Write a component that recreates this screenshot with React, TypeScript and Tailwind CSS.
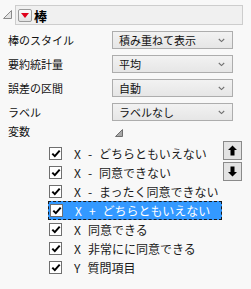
import React from "react";

const font = { fontFamily: '"Noto Sans CJK JP", "Noto Sans", sans-serif' };

function Chevron() {
  return (
    <svg width="7" height="5" viewBox="0 0 7 5" className="shrink-0">
      <path d="M0.8 1 L3.5 3.6 L6.2 1" fill="none" stroke="#707070" strokeWidth="1.1" />
    </svg>
  );
}

function Dropdown({ text }: { text: string }) {
  return (
    <div className="flex h-[18px] w-[121px] items-center justify-between border border-[#adadad] bg-gradient-to-b from-[#f2f2f2] to-[#e6e6e6] pl-[6px] pr-[7px] text-[11px] leading-none text-[#111]">
      <span>{text}</span>
      <Chevron />
    </div>
  );
}

function Check({ selected }: { selected?: boolean }) {
  return (
    <div className="flex h-[13px] w-[13px] shrink-0 items-center justify-center border border-[#6f6f6f] bg-white">
      <svg width="10" height="9" viewBox="0 0 10 9">
        <path d="M1.3 4.6 L3.8 7.1 L8.7 1.6" fill="none" stroke="#000" strokeWidth="2" />
      </svg>
    </div>
  );
}

const rows = [
  { text: "X - どちらともいえない" },
  { text: "X - 同意できない" },
  { text: "X - まったく同意できない" },
  { text: "X + どちらともいえない", selected: true },
  { text: "X 同意できる" },
  { text: "X 非常にに同意できる" },
  { text: "Y 質問項目" },
];

function Label({ t }: { t: string }) {
  const [a, ...rest] = t.split(" ");
  return (
    <span className="flex items-center whitespace-nowrap">
      <span>{a}</span>
      {rest.length === 2 ? (
        <>
          <span className="ml-[7px]">{rest[0]}</span>
          <span className="ml-[7px]">{rest[1]}</span>
        </>
      ) : (
        <span className="ml-[7px]">{rest.join(" ")}</span>
      )}
    </span>
  );
}

export default function App() {
  return (
    <div className="h-[289px] w-[251px] overflow-hidden bg-[#f8f8f8] text-[#111]" style={font}>
      {/* header */}
      <div className="flex items-start pt-[5px]">
        <svg width="15" height="19" viewBox="0 0 15 19" className="shrink-0">
          <path d="M3.5 13.5 L11.5 5.5 L11.5 13.5 Z" fill="#e4e4e4" stroke="#8a8a8a" strokeWidth="1" />
        </svg>
        <div className="flex h-[20px] w-[228px] items-center border border-[#cdcdcd] bg-[#f0f0f0] pl-[2px]">
          <div className="flex h-[13px] w-[14px] items-center justify-center rounded-[2px] border border-[#9a9a9a] bg-gradient-to-b from-[#fbfbfb] to-[#e2e2e2]">
            <svg width="8" height="5" viewBox="0 0 8 5">
              <path d="M0 0 L8 0 L4 5 Z" fill="#e0001a" />
            </svg>
          </div>
          <span className="ml-[2px] text-[13px] font-bold leading-none text-black">棒</span>
        </div>
      </div>

      {/* settings rows */}
      <div className="mt-[6px] flex flex-col gap-[6px] text-[11px]">
        {[
          ["棒のスタイル", "積み重ねて表示"],
          ["要約統計量", "平均"],
          ["誤差の区間", "自動"],
          ["ラベル", "ラベルなし"],
        ].map(([l, v]) => (
          <div key={l} className="flex items-center">
            <span className="w-[112px] pl-[8px] leading-none">{l}</span>
            <Dropdown text={v} />
          </div>
        ))}
      </div>

      {/* 変数 */}
      <div className="mt-[3px] flex h-[14px] items-center text-[11px]">
        <span className="w-[115px] pl-[8px] leading-none">変数</span>
        <svg width="8" height="8" viewBox="0 0 8 8" className="mt-[3px]">
          <path d="M7.5 0.5 L7.5 7.5 L0.5 7.5 Z" fill="#a8a8a8" stroke="#6e6e6e" strokeWidth="1" />
        </svg>
      </div>

      {/* list */}
      <div className="mt-[6px] flex pl-[48px]">
        <div className="flex w-[174px] flex-col">
          {rows.map((r) => (
            <div
              key={r.text}
              className={
                "flex h-[19px] items-center pl-[1px] text-[12px] leading-none " +
                (r.selected
                  ? "border border-dashed border-[#1a1a1a] bg-[#3399ff] pl-0 text-white"
                  : "text-[#1a1a1a]")
              }
            >
              <Check selected={r.selected} />
              <span className="ml-[12px]">
                <Label t={r.text} />
              </span>
            </div>
          ))}
        </div>
        <div className="ml-[1px] mt-[-3px] flex flex-col gap-[2px]">
          {[false, true].map((down) => (
            <div
              key={String(down)}
              className="flex h-[19px] w-[19px] items-center justify-center border border-[#8a8a8a] bg-[#e3e3e3]"
            >
              <svg width="9" height="11" viewBox="0 0 9 11" style={{ transform: down ? "rotate(180deg)" : undefined }}>
                <path d="M4.5 0.5 L9 5 L6.5 5 L6.5 10.5 L2.5 10.5 L2.5 5 L0 5 Z" fill="#000" />
              </svg>
            </div>
          ))}
        </div>
      </div>
    </div>
  );
}
